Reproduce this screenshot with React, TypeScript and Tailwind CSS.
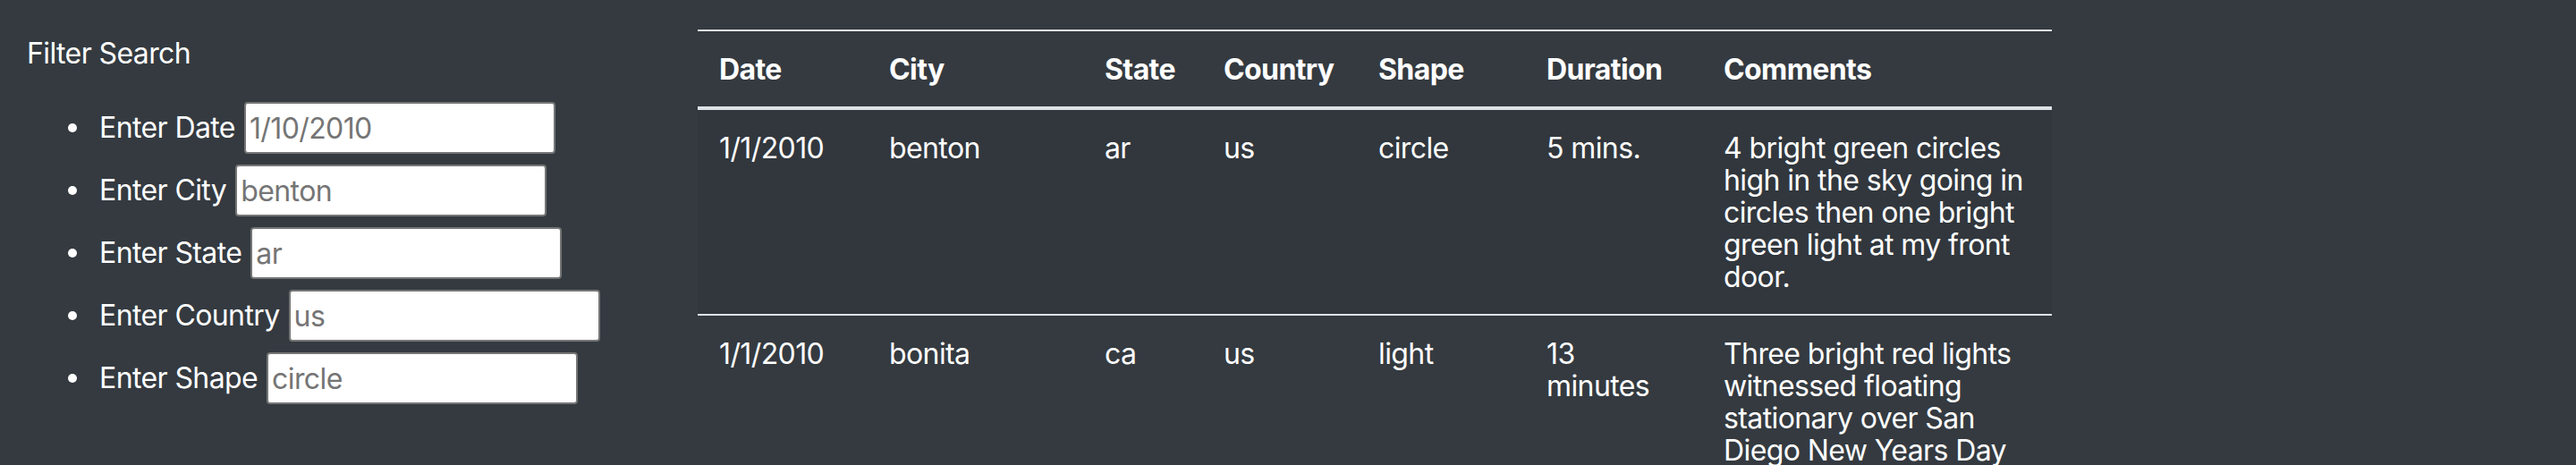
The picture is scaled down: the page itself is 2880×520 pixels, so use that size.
import React from "react";

const rows = [
  {
    date: "1/1/2010",
    city: "benton",
    state: "ar",
    country: "us",
    shape: "circle",
    duration: "5 mins.",
    comments:
      "4 bright green circles high in the sky going in circles then one bright green light at my front door.",
  },
  {
    date: "1/1/2010",
    city: "bonita",
    state: "ca",
    country: "us",
    shape: "light",
    duration: "13 minutes",
    comments:
      "Three bright red lights witnessed floating stationary over San Diego New Years Day 2010",
  },
];

const filters = [
  { label: "Enter Date", value: "1/10/2010" },
  { label: "Enter City", value: "benton" },
  { label: "Enter State", value: "ar" },
  { label: "Enter Country", value: "us" },
  { label: "Enter Shape", value: "circle" },
];

export default function App() {
  return (
    <div
      className="min-h-[520px] w-full bg-[#343a40] text-white flex text-[32px] leading-[36px] tracking-[-0.6px]"
      style={{ fontFamily: "Inter, 'Noto Sans', sans-serif" }}
    >
      <div className="w-[780px] shrink-0 pl-[30px] pt-[42px]">
        <div>Filter Search</div>
        <ul className="mt-[30px] flex flex-col">
          {filters.map((f) => (
            <li key={f.label} className="h-[70px] flex items-center">
              <span className="ml-[46px] w-[10px] h-[10px] rounded-full bg-white shrink-0" />
              <span className="ml-[25px]">{f.label}</span>
              <input
                className="ml-[10px] w-[348px] h-[58px] bg-white border-2 border-[#767676] rounded-[4px] px-[4px] text-[32px] tracking-[-0.6px] text-black placeholder:text-[#757575] outline-none"
                placeholder={f.value}
              />
            </li>
          ))}
        </ul>
      </div>
      <div className="pt-[33px]">
        <table className="table-fixed w-[1514px] border-collapse">
          <colgroup>
            <col className="w-[190px]" />
            <col className="w-[241px]" />
            <col className="w-[133px]" />
            <col className="w-[173px]" />
            <col className="w-[188px]" />
            <col className="w-[198px]" />
            <col className="w-[391px]" />
          </colgroup>
          <thead>
            <tr className="border-t-2 border-b-4 border-[#dee2e6]">
              {["Date", "City", "State", "Country", "Shape", "Duration", "Comments"].map((h) => (
                <th key={h} className="text-left font-bold pt-[25px] pb-[23px] px-[24px] align-top">
                  {h}
                </th>
              ))}
            </tr>
          </thead>
          <tbody>
            {rows.map((r, i) => (
              <tr
                key={i}
                className={
                  i % 2 === 0
                    ? "bg-[#31373d] border-b-2 border-[#dee2e6]"
                    : "border-b-2 border-[#dee2e6]"
                }
              >
                {[r.date, r.city, r.state, r.country, r.shape, r.duration, r.comments].map((c, j) => (
                  <td key={j} className="pt-[25px] pb-[23px] px-[24px] align-top">
                    {c}
                  </td>
                ))}
              </tr>
            ))}
          </tbody>
        </table>
      </div>
    </div>
  );
}
